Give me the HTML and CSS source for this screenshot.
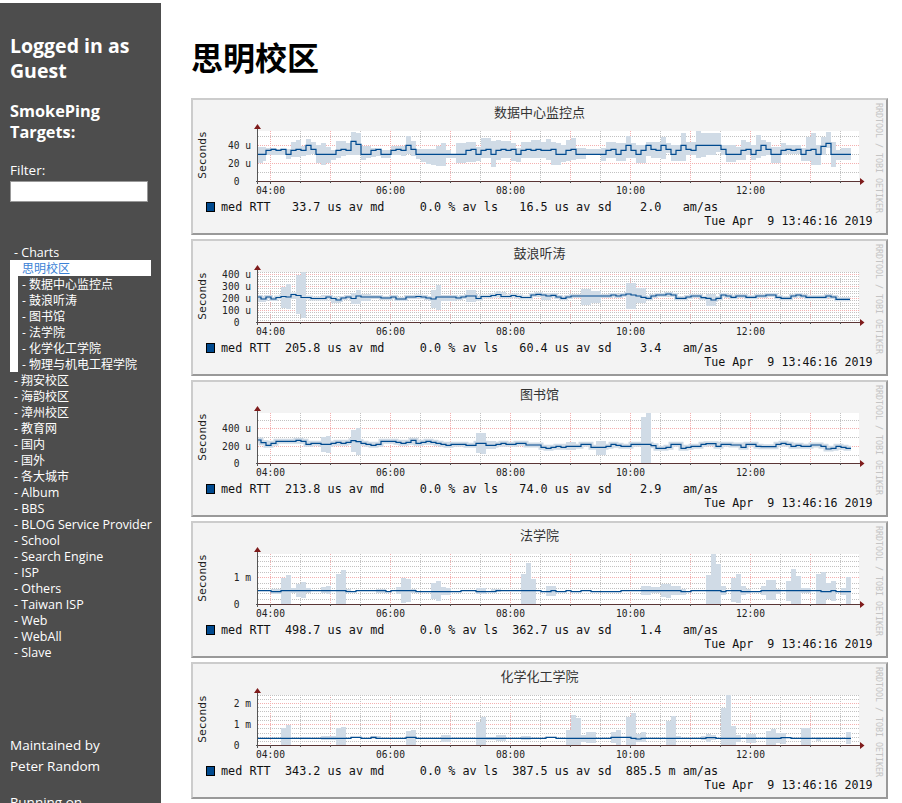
FILE: index.html
```html
<!DOCTYPE html>
<html lang="zh">
<head>
<meta charset="utf-8">
<title>思明校区</title>
<link rel="stylesheet" href="styles.css">
</head>
<body>
<div class="page">
<aside class="sidebar">
  <h2 class="login">Logged in as Guest</h2>
  <h3 class="targets">SmokePing Targets:</h3>
  <label class="filter-label" for="filter">Filter:</label>
  <input class="filter" id="filter" type="text">
  <ul class="menu">
    <li class="latin">- Charts</li>
    <li class="current">思明校区</li>
    <li class="subwrap"><ul class="sub">
      <li>- 数据中心监控点</li>
      <li>- 鼓浪听涛</li>
      <li>- 图书馆</li>
      <li>- 法学院</li>
      <li>- 化学化工学院</li>
      <li>- 物理与机电工程学院</li>
    </ul></li>
    <li>- 翔安校区</li>
    <li>- 海韵校区</li>
    <li>- 漳州校区</li>
    <li>- 教育网</li>
    <li>- 国内</li>
    <li>- 国外</li>
    <li>- 各大城市</li>
    <li class="latin">- Album</li>
    <li class="latin">- BBS</li>
    <li class="latin">- BLOG Service Provider</li>
    <li class="latin">- School</li>
    <li class="latin">- Search Engine</li>
    <li class="latin">- ISP</li>
    <li class="latin">- Others</li>
    <li class="latin">- Taiwan ISP</li>
    <li class="latin">- Web</li>
    <li class="latin">- WebAll</li>
    <li class="latin">- Slave</li>
  </ul>
  <p class="credit">Maintained by<br>Peter Random</p>
  <p class="running">Running on</p>
</aside>
<main class="main">
  <h1 class="heading">思明校区</h1>

  <svg class="graph" viewBox="193 100 693 133" width="693" height="133">
    <defs>
      <g id="frame-bg">
        <rect class="plot" x="258" y="131" width="601" height="50.5"/>
        <path class="grid-minor" d="M300.5 131V181M360.5 131V181M420.5 131V181M480.5 131V181M540.5 131V181M600.5 131V181M660.5 131V181M720.5 131V181M780.5 131V181M840.5 131V181"/>
        <path class="grid-major" d="M270.5 131V181M330.5 131V181M390.5 131V181M450.5 131V181M510.5 131V181M570.5 131V181M630.5 131V181M690.5 131V181M750.5 131V181M810.5 131V181"/>
      </g>
      <g id="frame-axes">
        <path class="axis-x" d="M258 181.5H861"/>
        <path class="axis-y" d="M257.5 128V184M255.5 181.5H258M270.5 181V184M300.5 181V183M330.5 181V183M360.5 181V183M390.5 181V184M420.5 181V183M450.5 181V183M480.5 181V183M510.5 181V184M540.5 181V183M570.5 181V183M600.5 181V183M630.5 181V184M660.5 181V183M690.5 181V183M720.5 181V183M750.5 181V184M780.5 181V183M810.5 181V183M840.5 181V183"/>
        <path class="arrow" d="M257.5 124L261 129H254ZM864.5 181.5L860 178V185Z"/>
        <rect class="swatch" x="206.5" y="202.5" width="8" height="9"/>
      </g>
    </defs>
    <use href="#frame-bg"/>
    <path class="grid-minor" d="M258 136.5H859M258 154.5H859M258 172.5H859"/>
    <path class="grid-major" d="M258 145.5H859M258 163.5H859"/>
    <path class="smoke" d="M260.5 147V163M263.5 147V161M268.5 148V155M273.5 148V155M278.5 149V155M283.5 149V155M288.5 149V159M293.5 142V157M298.5 140V157M303.5 146V156M308.5 139V155M313.5 142V154M318.5 145V163M323.5 143V165M328.5 147V163M333.5 150V160M338.5 141V158M343.5 141V156M348.5 143V155M353.5 132V155M358.5 133V155M363.5 146V160M368.5 146V158M373.5 148V157M378.5 150V156M383.5 150V158M388.5 150V158M393.5 146V155M398.5 146V155M403.5 146V156M408.5 136V154M413.5 141V156M418.5 149V159M423.5 149V162M428.5 149V164M433.5 149V165M438.5 146V166M443.5 143V166M448.5 150V158M453.5 154V158M458.5 143V163M463.5 143V163M468.5 142V162M473.5 142V162M478.5 147V161M483.5 138V158M488.5 138V158M493.5 141V167M498.5 140V160M503.5 141V158M508.5 141V158M513.5 143V161M518.5 148V162M523.5 142V158M528.5 142V158M533.5 140V158M538.5 140V158M543.5 142V158M548.5 139V160M553.5 142V165M558.5 143V165M563.5 145V162M568.5 140V161M573.5 138V160M578.5 148V159M583.5 148V159M588.5 149V155M593.5 149V155M598.5 149V155M603.5 148V161M608.5 142V158M613.5 142V158M618.5 143V161M623.5 143V161M628.5 136V158M633.5 143V158M638.5 145V163M643.5 145V163M648.5 142V156M653.5 142V158M658.5 142V158M663.5 137V159M668.5 143V153M673.5 145V161M678.5 145V161M683.5 133V161M688.5 142V155M693.5 142V155M698.5 131V158M703.5 133V157M708.5 133V155M713.5 133V155M718.5 133V152M723.5 145V155M728.5 145V162M733.5 145V162M738.5 147V160M743.5 140V160M748.5 142V155M753.5 145V160M758.5 135V158M763.5 140V156M768.5 142V155M773.5 147V163M778.5 147V163M783.5 143V155M788.5 145V154M793.5 145V154M798.5 145V154M803.5 148V161M808.5 137V161M813.5 133V165M818.5 145V165M823.5 137V155M828.5 132V148M833.5 142V167M838.5 150V160M843.5 148V160M848.5 148V160"/>
    <path class="line" d="M258 154.3H266V150.3H271V149.3H276V150.3H281V149.3H286V154.3H291V150.3H296V149.3H301V150.3H306V145.3H311V149.3H316V154.3H336V150.3H341V149.3H346V150.3H351V141.3H356V144.3H361V154.3H371V150.3H376V149.3H381V154.3H391V150.3H396V149.3H401V150.3H406V145.3H411V149.3H416V154.3H466V150.3H471V149.3H476V154.3H481V150.3H486V149.3H491V154.3H496V150.3H501V149.3H506V150.3H511V149.3H516V154.3H521V150.3H526V149.3H531V150.3H536V149.3H541V150.3H551V149.3H556V154.3H566V150.3H571V149.3H576V154.3H606V150.3H611V149.3H616V154.3H621V150.3H626V145.3H631V150.3H636V154.3H641V150.3H646V145.3H651V149.3H656V150.3H661V145.3H666V149.3H671V154.3H676V150.3H681V145.3H686V149.3H691V150.3H696V145.3H721V149.3H726V154.3H741V150.3H746V149.3H751V154.3H756V150.3H761V145.3H766V149.3H771V154.3H781V150.3H786V149.3H791V150.3H796V149.3H801V154.3H806V150.3H811V149.3H816V154.3H821V146.3H826V143.3H831V154.3H851"/>
    <use href="#frame-axes"/>
    <text class="title" x="539.5" y="117">数据中心监控点</text>
    <text class="ylabel" transform="rotate(-90 205.5 155)" x="205.5" y="155">Seconds</text>
    <text class="tick" x="251" y="149">40 u</text><text class="tick" x="251" y="167">20 u</text><text class="tick" x="239.5" y="185">0</text>
    <text class="xtick" x="270.5" y="194">04:00</text><text class="xtick" x="390.5" y="194">06:00</text><text class="xtick" x="510.5" y="194">08:00</text><text class="xtick" x="630.5" y="194">10:00</text><text class="xtick" x="750.5" y="194">12:00</text>
    <text class="legend" x="221" y="211">med RTT   33.7 us av md     0.0 % av ls   16.5 us av sd    2.0   am/as</text>
    <text class="stamp" x="872.5" y="225">Tue Apr  9 13:46:16 2019</text>
    <text class="credit-rrd" transform="translate(875.5 103) rotate(90)">RRDTOOL / TOBI OETIKER</text>
  </svg>

  <svg class="graph" viewBox="193 100 693 133" width="693" height="133">
    <use href="#frame-bg"/>
    <path class="grid-minor" d="M258 179.5H859M258 176.5H859M258 174.5H859M258 171.5H859M258 167.5H859M258 164.5H859M258 162.5H859M258 159.5H859M258 155.5H859M258 152.5H859M258 150.5H859M258 147.5H859M258 143.5H859M258 140.5H859M258 138.5H859M258 135.5H859M258 131.5H859"/>
    <path class="grid-major" d="M258 133.5H859M258 145.5H859M258 157.5H859M258 169.5H859"/>
    <path class="smoke" d="M260.5 155V161M263.5 155V161M283.5 146V167M288.5 143V168M293.5 155V158M298.5 134V173M303.5 131V177M323.5 154V158M328.5 154V158M333.5 157V162M338.5 157V162M353.5 152V163M358.5 149V163M363.5 153V160M368.5 153V160M433.5 149V167M438.5 144V169M443.5 154V160M448.5 154V160M453.5 154V160M468.5 149V161M473.5 149V161M498.5 150V155M503.5 151V156M543.5 152V159M548.5 152V159M583.5 148V164M588.5 148V164M593.5 150V162M598.5 150V162M628.5 142V168M633.5 142V168M638.5 147V162M643.5 147V162M708.5 153V165M713.5 153V165"/>
    <path class="band-thin" d="M258 156H261V158H266V156H271V158H276V156.5H281V155.5H286V156H291V153.5H296V154.5H301V156.5H311V157.5H326V156H331V157.5H336V159H341V157H346V156H351V157.5H356V155H361V156H381V157H391V156H396V158H406V156H416V155.5H421V156H426V157H431V158H436V156H456V157H461V156H466V155H476V157.5H481V155.5H491V154.5H496V153.5H501V155.5H511V154.5H516V155.5H521V156.5H531V154H536V153.3H541V154H546V155H551V154.3H556V156H561V157.3H566V156H571V155H611V154H616V155H621V154H626V153H631V154H636V155H641V156.3H646V157.3H651V155H656V154H666V153H671V154H676V157.3H686V156H691V155H701V156.7H706V157.3H711V159H716V157.3H721V154H726V155H731V156.3H736V155H746V156.3H756V155H766V154H776V156.3H781V157.3H791V155H796V154H801V155H806V156.3H826V155H831V156H836V158.3H850"/>
    <path class="line" d="M258 156H261V158H266V156H271V158H276V156.5H281V155.5H286V156H291V153.5H296V154.5H301V156.5H311V157.5H326V156H331V157.5H336V159H341V157H346V156H351V157.5H356V155H361V156H381V157H391V156H396V158H406V156H416V155.5H421V156H426V157H431V158H436V156H456V157H461V156H466V155H476V157.5H481V155.5H491V154.5H496V153.5H501V155.5H511V154.5H516V155.5H521V156.5H531V154H536V153.3H541V154H546V155H551V154.3H556V156H561V157.3H566V156H571V155H611V154H616V155H621V154H626V153H631V154H636V155H641V156.3H646V157.3H651V155H656V154H666V153H671V154H676V157.3H686V156H691V155H701V156.7H706V157.3H711V159H716V157.3H721V154H726V155H731V156.3H736V155H746V156.3H756V155H766V154H776V156.3H781V157.3H791V155H796V154H801V155H806V156.3H826V155H831V156H836V158.3H850"/>
    <use href="#frame-axes"/>
    <text class="title" x="539.5" y="117">鼓浪听涛</text>
    <text class="ylabel" transform="rotate(-90 205.5 155)" x="205.5" y="155">Seconds</text>
    <text class="tick" x="251" y="137">400 u</text><text class="tick" x="251" y="149">300 u</text><text class="tick" x="251" y="161">200 u</text><text class="tick" x="251" y="173">100 u</text><text class="tick" x="239.5" y="185">0</text>
    <text class="xtick" x="270.5" y="194">04:00</text><text class="xtick" x="390.5" y="194">06:00</text><text class="xtick" x="510.5" y="194">08:00</text><text class="xtick" x="630.5" y="194">10:00</text><text class="xtick" x="750.5" y="194">12:00</text>
    <text class="legend" x="221" y="211">med RTT  205.8 us av md     0.0 % av ls   60.4 us av sd    3.4   am/as</text>
    <text class="stamp" x="872.5" y="225">Tue Apr  9 13:46:16 2019</text>
    <text class="credit-rrd" transform="translate(875.5 103) rotate(90)">RRDTOOL / TOBI OETIKER</text>
  </svg>

  <svg class="graph" viewBox="193 100 693 133" width="693" height="133">
    <use href="#frame-bg"/>
    <path class="grid-minor" d="M258 138.5H859M258 155.5H859M258 173.5H859"/>
    <path class="grid-major" d="M258 146.5H859M258 164.5H859"/>
    <path class="smoke" d="M323.5 155V170M328.5 154V171M353.5 148V170M358.5 146V173M478.5 151V171M483.5 151V172M488.5 159V167M493.5 159V167M568.5 160V168M573.5 160V168M598.5 159V173M603.5 159V173M643.5 135V181M648.5 131V181"/>
    <path class="band" d="M258 158H261V160.7H266V163.3H271V161.3H276V159.3H296V158.3H301V159.3H306V162.3H311V161.3H321V162.3H331V161.3H336V160.3H341V161.3H346V160.3H351V158.7H356V159.7H361V161.3H366V162.3H371V163.3H376V162.3H381V159.3H396V160.3H401V161.3H406V160.3H411V158.3H416V161.3H421V160.3H426V159.3H431V160.3H436V161.3H441V162.3H446V163.3H451V162.3H466V163.3H476V161.3H486V163.3H496V162.3H501V161.3H506V162.3H516V161.3H526V163H541V165.3H546V166.3H551V165.3H556V164.3H561V165.3H566V164.3H581V162.3H591V165.3H606V164.3H611V162.3H616V163.3H621V164.3H631V162.3H651V163.7H656V166.3H666V165.3H671V162.3H681V166.3H686V165.3H691V164.3H701V162.3H706V161.7H716V164.3H721V162.3H731V163H741V165.3H746V162.3H756V164.3H761V164.7H776V162.3H781V161.3H786V162.3H791V164.3H796V163.3H801V164.3H811V163H821V164.3H826V167H831V166.3H836V164.3H841V165.3H846V166.3H851"/>
    <path class="line" d="M258 158H261V160.7H266V163.3H271V161.3H276V159.3H296V158.3H301V159.3H306V162.3H311V161.3H321V162.3H331V161.3H336V160.3H341V161.3H346V160.3H351V158.7H356V159.7H361V161.3H366V162.3H371V163.3H376V162.3H381V159.3H396V160.3H401V161.3H406V160.3H411V158.3H416V161.3H421V160.3H426V159.3H431V160.3H436V161.3H441V162.3H446V163.3H451V162.3H466V163.3H476V161.3H486V163.3H496V162.3H501V161.3H506V162.3H516V161.3H526V163H541V165.3H546V166.3H551V165.3H556V164.3H561V165.3H566V164.3H581V162.3H591V165.3H606V164.3H611V162.3H616V163.3H621V164.3H631V162.3H651V163.7H656V166.3H666V165.3H671V162.3H681V166.3H686V165.3H691V164.3H701V162.3H706V161.7H716V164.3H721V162.3H731V163H741V165.3H746V162.3H756V164.3H761V164.7H776V162.3H781V161.3H786V162.3H791V164.3H796V163.3H801V164.3H811V163H821V164.3H826V167H831V166.3H836V164.3H841V165.3H846V166.3H851"/>
    <use href="#frame-axes"/>
    <text class="title" x="539.5" y="117">图书馆</text>
    <text class="ylabel" transform="rotate(-90 205.5 155)" x="205.5" y="155">Seconds</text>
    <text class="tick" x="251" y="150">400 u</text><text class="tick" x="251" y="168">200 u</text><text class="tick" x="239.5" y="185">0</text>
    <text class="xtick" x="270.5" y="194">04:00</text><text class="xtick" x="390.5" y="194">06:00</text><text class="xtick" x="510.5" y="194">08:00</text><text class="xtick" x="630.5" y="194">10:00</text><text class="xtick" x="750.5" y="194">12:00</text>
    <text class="legend" x="221" y="211">med RTT  213.8 us av md     0.0 % av ls   74.0 us av sd    2.9   am/as</text>
    <text class="stamp" x="872.5" y="225">Tue Apr  9 13:46:16 2019</text>
    <text class="credit-rrd" transform="translate(875.5 103) rotate(90)">RRDTOOL / TOBI OETIKER</text>
  </svg>

  <svg class="graph" viewBox="193 100 693 133" width="693" height="133">
    <use href="#frame-bg"/>
    <path class="grid-minor" d="M258 176.5H859M258 170.5H859M258 165.5H859M258 160.5H859M258 149.5H859M258 143.5H859M258 138.5H859M258 133.5H859"/>
    <path class="grid-major" d="M258 154.5H859"/>
    <path class="smoke" d="M273.5 166V171M278.5 166V171M283.5 155V181M288.5 152V181M293.5 165V170M298.5 161V174M303.5 159V175M308.5 165V170M323.5 164V170M328.5 163V171M338.5 151V181M343.5 147V181M348.5 166V169M378.5 166V170M383.5 166V170M398.5 164V171M403.5 155V180M408.5 156V179M413.5 166V170M433.5 160V176M438.5 158V178M443.5 164V172M448.5 165V172M478.5 165V171M483.5 165V171M493.5 166V169M498.5 166V169M523.5 151V181M528.5 140V181M533.5 156V181M548.5 163V173M553.5 163V173M643.5 163V172M648.5 163V172M653.5 164V170M658.5 164V170M663.5 161V174M668.5 161V175M673.5 163V172M678.5 163V172M683.5 166V172M708.5 152V181M713.5 131V181M718.5 141V181M723.5 163V172M733.5 155V179M738.5 151V180M743.5 163V172M748.5 166V171M763.5 163V172M768.5 157V177M773.5 157V177M778.5 166V171M788.5 158V178M793.5 146V181M798.5 153V181M803.5 165V170M808.5 165V170M818.5 151V181M823.5 149V181M828.5 160V176M833.5 158V178M843.5 165V172M848.5 154V181"/>
    <path class="line" d="M258 167.7H271V168.7H281V167.7H346V168.7H356V167.7H386V168.7H391V167.7H416V168.7H461V167.7H476V168.7H496V167.7H541V168.7H551V167.7H556V168.7H566V167.7H571V168.7H581V167.7H591V168.7H621V167.7H681V168.7H691V167.7H721V168.7H726V167.7H741V168.7H761V167.7H821V168.7H831V167.7H836V168.7H851"/>
    <use href="#frame-axes"/>
    <text class="title" x="539.5" y="117">法学院</text>
    <text class="ylabel" transform="rotate(-90 205.5 155)" x="205.5" y="155">Seconds</text>
    <text class="tick" x="251" y="158">1 m</text><text class="tick" x="239.5" y="185">0</text>
    <text class="xtick" x="270.5" y="194">04:00</text><text class="xtick" x="390.5" y="194">06:00</text><text class="xtick" x="510.5" y="194">08:00</text><text class="xtick" x="630.5" y="194">10:00</text><text class="xtick" x="750.5" y="194">12:00</text>
    <text class="legend" x="221" y="211">med RTT  498.7 us av md     0.0 % av ls  362.7 us av sd    1.4   am/as</text>
    <text class="stamp" x="872.5" y="225">Tue Apr  9 13:46:16 2019</text>
    <text class="credit-rrd" transform="translate(875.5 103) rotate(90)">RRDTOOL / TOBI OETIKER</text>
  </svg>

  <svg class="graph" viewBox="193 100 693 133" width="693" height="133">
    <use href="#frame-bg"/>
    <path class="grid-minor" d="M258 177.5H859M258 173.5H859M258 169.5H859M258 164.5H859M258 156.5H859M258 152.5H859M258 147.5H859M258 143.5H859M258 135.5H859M258 131.5H859"/>
    <path class="grid-major" d="M258 139.5H859M258 160.5H859"/>
    <path class="smoke" d="M283.5 164V181M288.5 161V181M303.5 173V175M308.5 173V175M323.5 172V176M328.5 172V176M333.5 172V176M338.5 164V181M343.5 163V181M373.5 172V175M378.5 172V175M408.5 167V181M413.5 166V181M443.5 171V178M448.5 171V178M478.5 158V181M483.5 153V181M488.5 173V176M493.5 173V176M498.5 171V177M503.5 171V177M523.5 172V176M528.5 172V176M568.5 166V181M573.5 151V181M578.5 154V181M583.5 171V178M588.5 168V179M593.5 168V179M613.5 168V179M618.5 166V181M628.5 153V181M633.5 149V181M638.5 170V178M643.5 168V178M668.5 157V181M673.5 152V181M678.5 172V175M703.5 172V176M708.5 170V178M713.5 171V176M723.5 144V181M728.5 131V181M733.5 162V181M738.5 171V178M748.5 170V179M753.5 170V179M768.5 167V181M773.5 165V181M778.5 169V179M783.5 169V180M803.5 164V181M808.5 164V181M818.5 173V177M848.5 168V180"/>
    <path class="line" d="M258 174.3H351V173.3H361V174.3H371V173.3H376V174.3H406V173.3H416V174.3H546V173.3H556V174.3H611V173.3H631V174.3H636V175H641V174.3H706V173.6H716V174.3H781V173.6H791V174.3H851"/>
    <use href="#frame-axes"/>
    <text class="title" x="539.5" y="117">化学化工学院</text>
    <text class="ylabel" transform="rotate(-90 205.5 155)" x="205.5" y="155">Seconds</text>
    <text class="tick" x="251" y="143">2 m</text><text class="tick" x="251" y="164">1 m</text><text class="tick" x="239.5" y="185">0</text>
    <text class="xtick" x="270.5" y="194">04:00</text><text class="xtick" x="390.5" y="194">06:00</text><text class="xtick" x="510.5" y="194">08:00</text><text class="xtick" x="630.5" y="194">10:00</text><text class="xtick" x="750.5" y="194">12:00</text>
    <text class="legend" x="221" y="211">med RTT  343.2 us av md     0.0 % av ls  387.5 us av sd  885.5 m am/as</text>
    <text class="stamp" x="872.5" y="225">Tue Apr  9 13:46:16 2019</text>
    <text class="credit-rrd" transform="translate(875.5 103) rotate(90)">RRDTOOL / TOBI OETIKER</text>
  </svg>
</main>
</div>
</body>
</html>
```

FILE: styles.css
```css
html, body {
  margin: 0;
  padding: 0;
  height: 803px;
  overflow: hidden;
  background: #fff;
}
body {
  font-family: "Open Sans", "Noto Sans CJK SC", sans-serif;
  color: #000;
}
.page {
  display: flex;
  height: 800px;
  margin-top: 3px;
}
.sidebar {
  flex: 0 0 151px;
  padding: 30px 0 0 10px;
  background: #4d4d4d;
  color: #fff;
  overflow: hidden;
}
.login {
  margin: 0;
  font-size: 19.5px;
  line-height: 25px;
  font-weight: 700;
}
.targets {
  margin: 18px 0 0;
  font-size: 16.3px;
  line-height: 21px;
  font-weight: 700;
}
.filter-label {
  display: block;
  margin-top: 18px;
  font-size: 13.5px;
  line-height: 18px;
}
.filter {
  display: block;
  box-sizing: border-box;
  width: 138px;
  height: 21px;
  margin-top: 2px;
  padding: 0;
  background: #fff;
  border: 1px solid #999;
}
.menu {
  list-style: none;
  width: 141px;
  margin: 42px 0 0;
  padding: 0;
  font-size: 12px;
  line-height: 18px;
  white-space: nowrap;
}
.menu li {
  padding-left: 4px;
  height: 16px;
}
.menu .latin {
  font-size: 12.5px;
}
.menu .current {
  padding-left: 12px;
  background: #fff;
  color: #3b82d6;
}
.menu .subwrap {
  padding-left: 0;
  height: auto;
}
.sub {
  list-style: none;
  margin: 0;
  padding: 0;
  border-left: 8px solid #fff;
}
.credit {
  margin: 75px 0 0;
  font-size: 13.5px;
  line-height: 21px;
}
.running {
  margin: 15px 0 0;
  font-size: 13.5px;
  line-height: 21px;
}
.main {
  flex: 1;
  padding-left: 30px;
  min-width: 0;
}
.heading {
  margin: 0;
  height: 95px;
  font-family: "Noto Sans CJK SC", sans-serif;
  font-size: 32px;
  font-weight: 700;
  line-height: 106px;
}
.graph {
  display: block;
  width: 693px;
  height: 133px;
  margin-bottom: 4px;
  background: #f3f3f3;
  border: 2px solid;
  border-color: #ccc #999 #999 #ccc;
}
.plot { fill: #fff; }
.grid-minor, .grid-major {
  fill: none;
  stroke-width: 1;
  stroke-dasharray: 1 1;
  shape-rendering: crispEdges;
}
.grid-minor { stroke: #c2c2c2; }
.grid-major { stroke: #f4b0b0; }
.smoke {
  fill: none;
  stroke: #d0dbe6;
  stroke-width: 5;
  shape-rendering: crispEdges;
}
.band, .band-thin {
  fill: none;
  stroke: #d0dbe6;
}
.band { stroke-width: 5; }
.band-thin { stroke-width: 4; }
.line {
  fill: none;
  stroke: #004a8f;
  stroke-width: 1.2;
}
.axis-x {
  fill: none;
  stroke: #5a3535;
  shape-rendering: crispEdges;
}
.axis-y {
  fill: none;
  stroke: #555;
  shape-rendering: crispEdges;
}
.arrow { fill: #7f1c1c; }
.swatch { fill: #004a8f; stroke: #000; }
.title {
  font-family: "Noto Sans CJK SC", sans-serif;
  font-size: 13px;
  fill: #333;
  text-anchor: middle;
}
.ylabel, .tick, .xtick, .legend, .stamp, .credit-rrd {
  font-family: "DejaVu Sans Mono", monospace;
  white-space: pre;
}
.ylabel {
  font-size: 11.3px;
  fill: #222;
  text-anchor: middle;
}
.tick {
  font-size: 9.6px;
  fill: #222;
  text-anchor: end;
}
.xtick {
  font-size: 9.6px;
  fill: #222;
  text-anchor: middle;
}
.legend {
  font-size: 11.8px;
  fill: #111;
}
.stamp {
  font-size: 11.65px;
  fill: #111;
  text-anchor: end;
}
.credit-rrd {
  font-size: 8.3px;
  fill: #c4c4c4;
}
```
